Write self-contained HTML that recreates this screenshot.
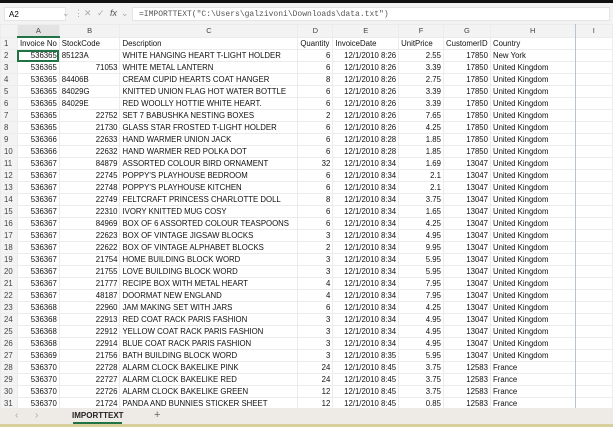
<!DOCTYPE html>
<html><head><meta charset="utf-8"><style>
body{margin:0;width:613px;height:427px;overflow:hidden;background:#fff;font-family:"Liberation Sans",sans-serif;position:relative}
.top{position:absolute;left:0;top:0;width:613px;height:3px;background:#111}
.fb{position:absolute;left:0;top:3px;width:613px;height:21px;background:#f3f3f3}
.nb{position:absolute;left:4px;top:4px;width:62px;height:14px;background:#fff;border:1px solid #e4e4e4;font-size:8px;line-height:13px;padding-left:4px;box-sizing:border-box}
.fx{position:absolute;left:132px;top:4px;width:478px;height:14px;background:#fff;border:1px solid #e4e4e4;font-family:"Liberation Mono",monospace;font-size:8px;line-height:13px;padding-left:6px;box-sizing:border-box;color:#555}
.ic{position:absolute;top:5px;font-size:9px;color:#aaa}
table{position:absolute;left:0;top:24px;border-collapse:collapse;table-layout:fixed;font-size:7.8px}
td{height:11px;padding:0 2px;border:1px solid #ececec;white-space:nowrap;overflow:hidden;color:#111;line-height:11px}
tr.h td{background:#f3f3f3;color:#444;text-align:center;height:10px;font-size:7.5px}
td.n{background:#f3f3f3;color:#444;text-align:left;padding-left:3px}
.r{text-align:right}
.tabs{position:absolute;left:0;top:408px;width:613px;height:17px;background:#eeeae6}
.bl{position:absolute;left:0;top:424px;width:613px;height:3px;background:#d8cf9a}
.vl{position:absolute;left:575px;top:24px;width:1px;height:384px;background:#b8c4d0}
</style></head><body>
<div class="top"></div>
<div class="fb"><div class="nb">A2</div>
<span class="ic" style="left:62px">⌄</span><span class="ic" style="left:74px">⋮</span><span class="ic" style="left:84px">✕</span><span class="ic" style="left:97px">✓</span><span class="ic" style="left:110px;font-style:italic;color:#555">fx</span><span class="ic" style="left:121px">⌄</span>
<div class="fx">=IMPORTTEXT("C:\Users\galzivoni\Downloads\data.txt")</div></div>
<table>
<colgroup><col style="width:17px"><col style="width:41px"><col style="width:61px"><col style="width:178px"><col style="width:35px"><col style="width:66px"><col style="width:45px"><col style="width:47px"><col style="width:85px"><col style="width:38px"></colgroup>
<tr class="h"><td></td><td style="background:#e3e3e3;border-bottom:2px solid #217346">A</td><td>B</td><td>C</td><td>D</td><td>E</td><td>F</td><td>G</td><td>H</td><td>I</td></tr>
<tr><td class="n">1</td><td>Invoice No</td><td>StockCode</td><td>Description</td><td>Quantity</td><td>InvoiceDate</td><td>UnitPrice</td><td>CustomerID</td><td>Country</td><td></td></tr>
<tr><td class="n">2</td><td class="r" style="outline:2px solid #217346;outline-offset:-2px">536365</td><td>85123A</td><td>WHITE HANGING HEART T-LIGHT HOLDER</td><td class="r">6</td><td class="r">12/1/2010 8:26</td><td class="r">2.55</td><td class="r">17850</td><td>New York</td><td></td></tr>
<tr><td class="n">3</td><td class="r">536365</td><td class="r">71053</td><td>WHITE METAL LANTERN</td><td class="r">6</td><td class="r">12/1/2010 8:26</td><td class="r">3.39</td><td class="r">17850</td><td>United Kingdom</td><td></td></tr>
<tr><td class="n">4</td><td class="r">536365</td><td>84406B</td><td>CREAM CUPID HEARTS COAT HANGER</td><td class="r">8</td><td class="r">12/1/2010 8:26</td><td class="r">2.75</td><td class="r">17850</td><td>United Kingdom</td><td></td></tr>
<tr><td class="n">5</td><td class="r">536365</td><td>84029G</td><td>KNITTED UNION FLAG HOT WATER BOTTLE</td><td class="r">6</td><td class="r">12/1/2010 8:26</td><td class="r">3.39</td><td class="r">17850</td><td>United Kingdom</td><td></td></tr>
<tr><td class="n">6</td><td class="r">536365</td><td>84029E</td><td>RED WOOLLY HOTTIE WHITE HEART.</td><td class="r">6</td><td class="r">12/1/2010 8:26</td><td class="r">3.39</td><td class="r">17850</td><td>United Kingdom</td><td></td></tr>
<tr><td class="n">7</td><td class="r">536365</td><td class="r">22752</td><td>SET 7 BABUSHKA NESTING BOXES</td><td class="r">2</td><td class="r">12/1/2010 8:26</td><td class="r">7.65</td><td class="r">17850</td><td>United Kingdom</td><td></td></tr>
<tr><td class="n">8</td><td class="r">536365</td><td class="r">21730</td><td>GLASS STAR FROSTED T-LIGHT HOLDER</td><td class="r">6</td><td class="r">12/1/2010 8:26</td><td class="r">4.25</td><td class="r">17850</td><td>United Kingdom</td><td></td></tr>
<tr><td class="n">9</td><td class="r">536366</td><td class="r">22633</td><td>HAND WARMER UNION JACK</td><td class="r">6</td><td class="r">12/1/2010 8:28</td><td class="r">1.85</td><td class="r">17850</td><td>United Kingdom</td><td></td></tr>
<tr><td class="n">10</td><td class="r">536366</td><td class="r">22632</td><td>HAND WARMER RED POLKA DOT</td><td class="r">6</td><td class="r">12/1/2010 8:28</td><td class="r">1.85</td><td class="r">17850</td><td>United Kingdom</td><td></td></tr>
<tr><td class="n">11</td><td class="r">536367</td><td class="r">84879</td><td>ASSORTED COLOUR BIRD ORNAMENT</td><td class="r">32</td><td class="r">12/1/2010 8:34</td><td class="r">1.69</td><td class="r">13047</td><td>United Kingdom</td><td></td></tr>
<tr><td class="n">12</td><td class="r">536367</td><td class="r">22745</td><td>POPPY'S PLAYHOUSE BEDROOM</td><td class="r">6</td><td class="r">12/1/2010 8:34</td><td class="r">2.1</td><td class="r">13047</td><td>United Kingdom</td><td></td></tr>
<tr><td class="n">13</td><td class="r">536367</td><td class="r">22748</td><td>POPPY'S PLAYHOUSE KITCHEN</td><td class="r">6</td><td class="r">12/1/2010 8:34</td><td class="r">2.1</td><td class="r">13047</td><td>United Kingdom</td><td></td></tr>
<tr><td class="n">14</td><td class="r">536367</td><td class="r">22749</td><td>FELTCRAFT PRINCESS CHARLOTTE DOLL</td><td class="r">8</td><td class="r">12/1/2010 8:34</td><td class="r">3.75</td><td class="r">13047</td><td>United Kingdom</td><td></td></tr>
<tr><td class="n">15</td><td class="r">536367</td><td class="r">22310</td><td>IVORY KNITTED MUG COSY</td><td class="r">6</td><td class="r">12/1/2010 8:34</td><td class="r">1.65</td><td class="r">13047</td><td>United Kingdom</td><td></td></tr>
<tr><td class="n">16</td><td class="r">536367</td><td class="r">84969</td><td>BOX OF 6 ASSORTED COLOUR TEASPOONS</td><td class="r">6</td><td class="r">12/1/2010 8:34</td><td class="r">4.25</td><td class="r">13047</td><td>United Kingdom</td><td></td></tr>
<tr><td class="n">17</td><td class="r">536367</td><td class="r">22623</td><td>BOX OF VINTAGE JIGSAW BLOCKS</td><td class="r">3</td><td class="r">12/1/2010 8:34</td><td class="r">4.95</td><td class="r">13047</td><td>United Kingdom</td><td></td></tr>
<tr><td class="n">18</td><td class="r">536367</td><td class="r">22622</td><td>BOX OF VINTAGE ALPHABET BLOCKS</td><td class="r">2</td><td class="r">12/1/2010 8:34</td><td class="r">9.95</td><td class="r">13047</td><td>United Kingdom</td><td></td></tr>
<tr><td class="n">19</td><td class="r">536367</td><td class="r">21754</td><td>HOME BUILDING BLOCK WORD</td><td class="r">3</td><td class="r">12/1/2010 8:34</td><td class="r">5.95</td><td class="r">13047</td><td>United Kingdom</td><td></td></tr>
<tr><td class="n">20</td><td class="r">536367</td><td class="r">21755</td><td>LOVE BUILDING BLOCK WORD</td><td class="r">3</td><td class="r">12/1/2010 8:34</td><td class="r">5.95</td><td class="r">13047</td><td>United Kingdom</td><td></td></tr>
<tr><td class="n">21</td><td class="r">536367</td><td class="r">21777</td><td>RECIPE BOX WITH METAL HEART</td><td class="r">4</td><td class="r">12/1/2010 8:34</td><td class="r">7.95</td><td class="r">13047</td><td>United Kingdom</td><td></td></tr>
<tr><td class="n">22</td><td class="r">536367</td><td class="r">48187</td><td>DOORMAT NEW ENGLAND</td><td class="r">4</td><td class="r">12/1/2010 8:34</td><td class="r">7.95</td><td class="r">13047</td><td>United Kingdom</td><td></td></tr>
<tr><td class="n">23</td><td class="r">536368</td><td class="r">22960</td><td>JAM MAKING SET WITH JARS</td><td class="r">6</td><td class="r">12/1/2010 8:34</td><td class="r">4.25</td><td class="r">13047</td><td>United Kingdom</td><td></td></tr>
<tr><td class="n">24</td><td class="r">536368</td><td class="r">22913</td><td>RED COAT RACK PARIS FASHION</td><td class="r">3</td><td class="r">12/1/2010 8:34</td><td class="r">4.95</td><td class="r">13047</td><td>United Kingdom</td><td></td></tr>
<tr><td class="n">25</td><td class="r">536368</td><td class="r">22912</td><td>YELLOW COAT RACK PARIS FASHION</td><td class="r">3</td><td class="r">12/1/2010 8:34</td><td class="r">4.95</td><td class="r">13047</td><td>United Kingdom</td><td></td></tr>
<tr><td class="n">26</td><td class="r">536368</td><td class="r">22914</td><td>BLUE COAT RACK PARIS FASHION</td><td class="r">3</td><td class="r">12/1/2010 8:34</td><td class="r">4.95</td><td class="r">13047</td><td>United Kingdom</td><td></td></tr>
<tr><td class="n">27</td><td class="r">536369</td><td class="r">21756</td><td>BATH BUILDING BLOCK WORD</td><td class="r">3</td><td class="r">12/1/2010 8:35</td><td class="r">5.95</td><td class="r">13047</td><td>United Kingdom</td><td></td></tr>
<tr><td class="n">28</td><td class="r">536370</td><td class="r">22728</td><td>ALARM CLOCK BAKELIKE PINK</td><td class="r">24</td><td class="r">12/1/2010 8:45</td><td class="r">3.75</td><td class="r">12583</td><td>France</td><td></td></tr>
<tr><td class="n">29</td><td class="r">536370</td><td class="r">22727</td><td>ALARM CLOCK BAKELIKE RED</td><td class="r">24</td><td class="r">12/1/2010 8:45</td><td class="r">3.75</td><td class="r">12583</td><td>France</td><td></td></tr>
<tr><td class="n">30</td><td class="r">536370</td><td class="r">22726</td><td>ALARM CLOCK BAKELIKE GREEN</td><td class="r">12</td><td class="r">12/1/2010 8:45</td><td class="r">3.75</td><td class="r">12583</td><td>France</td><td></td></tr>
<tr><td class="n">31</td><td class="r">536370</td><td class="r">21724</td><td>PANDA AND BUNNIES STICKER SHEET</td><td class="r">12</td><td class="r">12/1/2010 8:45</td><td class="r">0.85</td><td class="r">12583</td><td>France</td><td></td></tr>
</table>
<div class="vl"></div>
<div class="tabs">
<span style="position:absolute;left:15px;top:2px;font-size:10px;color:#aaa">‹</span>
<span style="position:absolute;left:35px;top:2px;font-size:10px;color:#aaa">›</span>
<span style="position:absolute;left:72px;top:3px;font-size:8px;font-weight:bold;color:#222">IMPORTTEXT</span>
<div style="position:absolute;left:73px;top:14px;width:49px;height:2px;background:#217346"></div>
<span style="position:absolute;left:154px;top:1px;font-size:11px;color:#666">+</span>
</div>
<div class="bl"></div>
</body></html>
